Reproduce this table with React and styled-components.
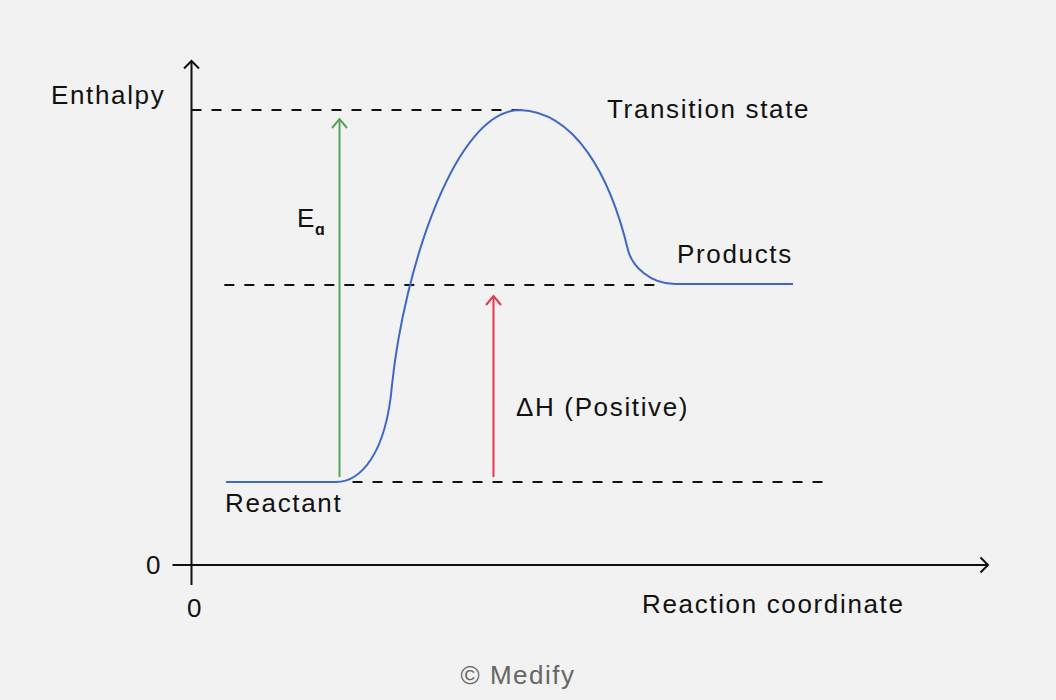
import React from "react";
import styled, { createGlobalStyle } from "styled-components";

const GlobalStyle = createGlobalStyle`
  html, body {
    margin: 0;
    padding: 0;
    background: #f2f2f2;
  }
`;

const Frame = styled.div`
  width: 1056px;
  height: 700px;
  display: flex;
  flex-direction: column;
  background: #f2f2f2;
  overflow: hidden;
`;

const Chart = styled.svg`
  display: block;
  width: 1056px;
  height: 660px;
  flex: none;
`;

const Label = styled.text`
  font-family: "Liberation Sans", Arial, sans-serif;
  font-size: ${(p) => p.$size || 26}px;
  font-weight: ${(p) => p.$weight || 400};
  letter-spacing: ${(p) => (p.$spacing != null ? p.$spacing : 1.65)}px;
  fill: #111;
`;

const Credit = styled.div`
  display: flex;
  justify-content: center;
  padding-right: 20px;
  font-family: "Liberation Sans", Arial, sans-serif;
  font-size: 26px;
  line-height: 30px;
  letter-spacing: 1.5px;
  color: #666;
`;

const AXIS = "#111";
const CURVE = "#3d68c8";
const GREEN = "#56a556";
const RED = "#e8364a";

// reactant plateau -> transition state -> products plateau
const PROFILE =
  "M226 482 H336 " +
  "C360 482 386 455 392 385 " +
  "C404 270 455 110 520 110 " +
  "C575 112 610 175 628 250 " +
  "C632 266 650 284 675 284 " +
  "H793";

const Arrow = ({ x, top, bottom, color }) => (
  <g stroke={color} strokeWidth="2" fill="none">
    <line x1={x} y1={bottom} x2={x} y2={top + 1} />
    <polyline points={`${x - 7.5},${top + 9} ${x},${top} ${x + 7.5},${top + 9}`} />
  </g>
);

const Dashed = ({ y, from, to }) => (
  <line
    x1={from}
    y1={y}
    x2={to}
    y2={y}
    stroke={AXIS}
    strokeWidth="2"
    strokeDasharray="10 10"
  />
);

export default function App() {
  return (
    <Frame>
      <GlobalStyle />
      <Chart viewBox="0 0 1056 660">
        {/* guide lines */}
        <Dashed y={110} from={191.5} to={522} />
        <Dashed y={285} from={224.3} to={655} />
        <Dashed y={482} from={352.5} to={823} />

        {/* axes */}
        <g stroke={AXIS} strokeWidth="2" fill="none">
          <line x1="191.5" y1="585" x2="191.5" y2="62" />
          <polyline points="184,68.5 191.5,61 199,68.5" />
          <line x1="172.5" y1="565" x2="987" y2="565" />
          <polyline points="980.5,557.5 988,565 980.5,572.5" />
        </g>

        {/* energy profile */}
        <path d={PROFILE} stroke={CURVE} strokeWidth="2" fill="none" />

        <Arrow x={339.5} top={119} bottom={477} color={GREEN} />
        <Arrow x={493.5} top={296} bottom={477} color={RED} />

        <Label x="51" y="104">Enthalpy</Label>
        <Label x="607" y="118">Transition state</Label>
        <Label x="677" y="263">Products</Label>
        <Label x="516" y="416">ΔH (Positive)</Label>
        <Label x="225" y="512">Reactant</Label>
        <Label x="642" y="613">Reaction coordinate</Label>
        <Label x="146" y="574" $spacing={0}>0</Label>
        <Label x="187" y="617" $spacing={0}>0</Label>
        <Label x="297" y="227" $spacing={0}>E</Label>
        <Label x="315" y="235" $size={16} $weight={700} $spacing={0}>ɑ</Label>
      </Chart>
      <Credit>© Medify</Credit>
    </Frame>
  );
}
